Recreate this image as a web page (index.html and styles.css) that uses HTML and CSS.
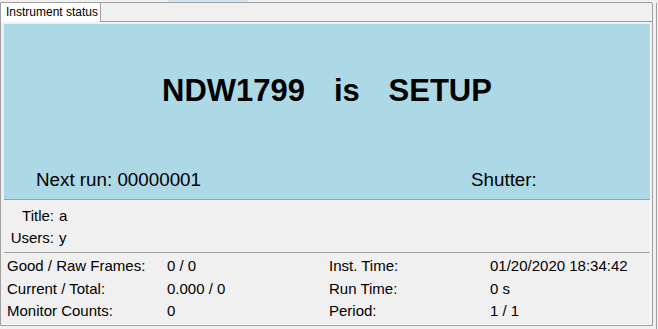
FILE: index.html
```html
<!DOCTYPE html>
<html lang="en">
<head>
  <meta charset="UTF-8">
  <title>Instrument status</title>
  <link rel="stylesheet" href="styles.css">
</head>
<body>
  <div class="top-strip"><span class="top-highlight"></span></div>

  <div class="layout">
    <div class="tabs">
      <div class="tab-bar">
        <div class="tab active">Instrument status</div>
      </div>

      <div class="pane">
        <div class="pane-inner">
          <div class="banner">
            <div class="banner-title">NDW1799   is   SETUP</div>
            <div class="banner-row">
              <span>Next run: 00000001</span>
              <span>Shutter:</span>
            </div>
          </div>

          <div class="info">
            <span class="info-label">Title:</span><span>a</span>
            <span class="info-label">Users:</span><span>y</span>
          </div>

          <div class="stats">
            <span>Good / Raw Frames:</span><span>0 / 0</span>
            <span>Inst. Time:</span><span>01/20/2020 18:34:42</span>
            <span>Current / Total:</span><span>0.000 / 0</span>
            <span>Run Time:</span><span>0 s</span>
            <span>Monitor Counts:</span><span>0</span>
            <span>Period:</span><span>1 / 1</span>
          </div>
        </div>
      </div>
    </div>

    <div class="side-edge"></div>
  </div>
</body>
</html>
```

FILE: styles.css
```css
:root {
  --bg: #f0f0f0;
  --border: #a0a0a0;
  --banner: #add8e6;
  --text: #000;
}

* {
  box-sizing: border-box;
  margin: 0;
  padding: 0;
}

body {
  width: 658px;
  height: 329px;
  overflow: hidden;
  background: var(--bg);
  color: var(--text);
  font-family: "Liberation Sans", Arial, sans-serif;
}

.top-strip {
  height: 2px;
}

.top-highlight {
  display: block;
  width: 80px;
  height: 2px;
  margin-left: 168px;
  background: #cfe4f5;
}

.layout {
  display: flex;
  height: 327px;
}

.tabs {
  width: 653px;
  height: 324px;
  border: 1px solid var(--border);
  border-top-right-radius: 2px;
  display: flex;
  flex-direction: column;
}

.tab-bar {
  height: 19px;
  border-bottom: 1px solid var(--border);
  display: flex;
}

.tab {
  width: 100px;
  height: 19px;
  padding: 1px 0 0 5px;
  background: #fff;
  border-right: 1px solid var(--border);
  font-size: 12px;
  line-height: 17px;
}

.pane {
  flex: 1;
  padding: 2px 1px 0 3px;
}

.pane-inner {
  height: 100%;
  border-right: 1px solid #fff;
  border-bottom: 1px solid #fff;
}

/* blue status block */
.banner {
  height: 176px;
  background: var(--banner);
  border-bottom: 1px solid var(--border);
  display: flex;
  flex-direction: column;
  justify-content: space-between;
  padding: 50px 0 8px;
}

.banner-title {
  text-align: center;
  font-size: 31px;
  font-weight: bold;
  line-height: 34px;
  word-spacing: 1px;
  white-space: pre;
}

.banner-row {
  display: grid;
  grid-template-columns: 435px 1fr;
  padding-left: 32px;
  font-size: 18.8px;
  line-height: 22px;
}

.info {
  display: grid;
  grid-template-columns: 50px auto;
  column-gap: 5px;
  justify-content: start;
  padding: 5px 0 3px;
  font-size: 15px;
  line-height: 22px;
}

.info-label {
  text-align: right;
}

.stats {
  display: grid;
  grid-template-columns: 160px 162px 161px 1fr;
  padding: 2px 0 0 3px;
  border-top: 1px solid var(--border);
  font-size: 15px;
  line-height: 22.5px;
}

.side-edge {
  width: 1px;
  margin: 1px 0 0 3px;
  background: var(--border);
}
```
